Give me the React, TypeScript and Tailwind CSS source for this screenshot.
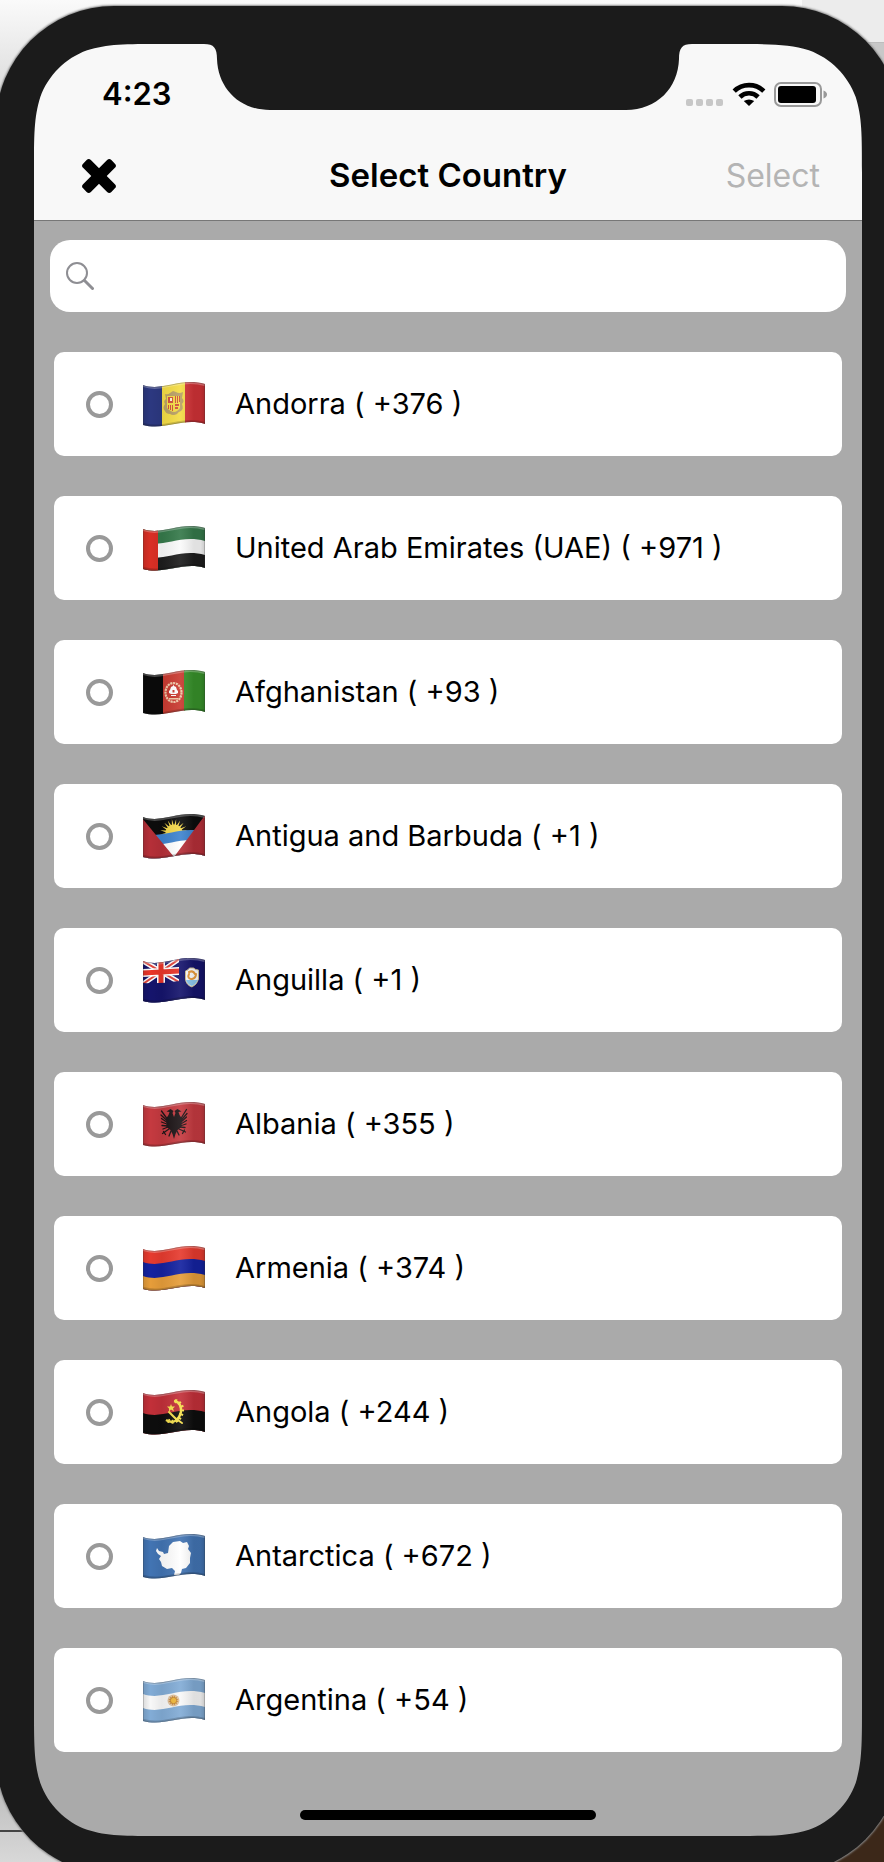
import { useState } from "react";
import type { ReactNode } from "react";

/** Area below a wavy horizontal edge that lies `d` units under the flag's top edge. */
const below = (d: number) =>
  `M0 ${3 + d}C20 ${10 + d} 36 ${-5 + d} 62 ${2 + d}V60H0Z`;

const OUTLINE = "M0 3C20 10 36 -5 62 2V42C40 35 22 49 0 43Z";

const rays = (n: number, cx: number, cy: number, inner: number, outer: number, from: number, to: number) =>
  Array.from({ length: n }, (_, i) => {
    const step = (to - from) / n;
    const a = from + step * i;
    const p = (r: number, t: number) => `${(cx + r * Math.cos(t)).toFixed(2)} ${(cy + r * Math.sin(t)).toFixed(2)}`;
    return `M${p(inner, a)}L${p(outer, a + step / 2)}L${p(inner, a + step)}Z`;
  }).join("");

type Country = { code: string; name: string; dial: string; flag: ReactNode };

const countries: Country[] = [
  {
    code: "AD",
    name: "Andorra",
    dial: "+376",
    flag: (
      <>
        <path fill="#2c3880" d="M0 0h20v46H0z" />
        <path fill="#f4dc45" d="M19 0h24v46H19z" />
        <path fill="#d03236" d="M42 0h20v46H42z" />
        <path fill="#b9a065" d="M22 12q3 1 5-1l3-2 3 1q3 2 7 0l-1 6q3 3 0 6 2 5-1 7-3 1-4 3-4 2-7 0-4 0-5-3-3-3 0-7-2-3 1-5z" />
        <path fill="#f4dc45" d="M24 14h13v12q-3 4-6 4t-7-4z" />
        <path fill="#d2503c" d="M25 15h5v6h-5zM32 14h1v7h-1zM34 14h1v7h-1zM36 14h1v6h-1zM25 23h1v4h-1zM27 23h1v5h-1zM29 23h1v6h-1zM32 22h4v2h-4zM32 25h3v2h-3z" />
        <path fill="#fff3d0" d="M27 16h2v3h-2z" />
      </>
    ),
  },
  {
    code: "AE",
    name: "United Arab Emirates (UAE)",
    dial: "+971",
    flag: (
      <>
        <path fill="#35794a" d="M0 0h62v46H0z" />
        <path fill="#fafafa" d={below(13)} />
        <path fill="#1d1d1d" d={below(27)} />
        <path fill="#d92f25" d="M0 0h15v46H0z" />
      </>
    ),
  },
  {
    code: "AF",
    name: "Afghanistan",
    dial: "+93",
    flag: (
      <>
        <path fill="#0a0a0a" d="M0 0h21v46H0z" />
        <path fill="#c93a30" d="M20 0h22v46H20z" />
        <path fill="#37902a" d="M41 0h21v46H41z" />
        <ellipse cx="30.500" cy="22.500" rx="8" ry="9.500" fill="none" stroke="#f0c9a8" strokeWidth="2.200" strokeDasharray="2.200 .7" />
        <path fill="#fff" d="M26 21l1-1 1-3 2-1 .5-2 .5 2 2 1 1 3 1 1v2l-2 1v2h-5v-2l-2-1z" />
        <path fill="#f0c9a8" d="M26 28h9v1.500h-9z" />
        <path fill="#c93a30" d="M29.500 20h2v2.500h-2zM28 24h5v1h-5z" />
      </>
    ),
  },
  {
    code: "AG",
    name: "Antigua and Barbuda",
    dial: "+1",
    flag: (
      <>
        <path fill="#0c0c0c" d="M0 0h62v46H0z" />
        <path fill="#f5d94b" d={rays(12, 31, 19, 7, 14, -Math.PI * 1.08, Math.PI * 0.08)} />
        <circle cx="31" cy="19" r="8.500" fill="#f5d94b" />
        <path fill="#3f84cf" d={below(16)} />
        <path fill="#fff" d={below(26)} />
        <path fill="#b52f38" d="M-1 4L31 43 30 48H-1zM63 0L31 43 32 48H63z" />
      </>
    ),
  },
  {
    code: "AI",
    name: "Anguilla",
    dial: "+1",
    flag: (
      <>
        <path fill="#15146c" d="M0 0h62v46H0z" />
        <g transform="translate(0 3) skewY(-3)">
          <path fill="none" stroke="#fff" strokeWidth="5" d="M0 0L36 23M36 0L0 23" />
          <path fill="none" stroke="#e0453c" strokeWidth="2" d="M0 0L36 23M36 0L0 23" />
          <path fill="#fff" d="M14 0h8v25h-8zM0 8h36v8H0z" />
          <path fill="#e93529" d="M15.500 0h5v25h-5zM0 9.500h36v5H0z" />
        </g>
        <path fill="#15146c" d="M36 0h8v46h-8zM0 25Q18 26 36 23V46H0z" />
        <path fill="#fff" stroke="#cdbd91" d="M42.500 13q3-1 4-3h4q2 2 5 2v9q-1 5-6.500 8-6-2-6.500-8z" />
        <path fill="#8cc8f0" d="M43 22h12q-2 4-6 6-5-2-6-6z" />
        <path fill="none" stroke="#eb9d3d" strokeWidth="2" strokeLinecap="round" d="M46 14q4-2 6 2M53 16q0 4-4 5M48 21q-4-1-2-5" />
      </>
    ),
  },
  {
    code: "AL",
    name: "Albania",
    dial: "+355",
    flag: (
      <>
        <path fill="#c53a40" d="M0 0h62v46H0z" />
        <path
          fill="#1d1517"
          d="M31 15l-1.500-4 1-2-3-2-4 2.500 3 .5-1 3-2 3v9l4 3 2 4 1.500 5 1.500-5 2-4 4-3v-9l-2-3-1-3 3-.500-4-2.500-3 2 1 2z"
        />
        <path
          fill="none"
          stroke="#1d1517"
          strokeWidth="1.300"
          strokeLinecap="round"
          d="M25 18L18.500 9M25 19.500L18 13M25 21L18.500 16.500M25 22.500L18.500 20M25 24L19 23.500M25 25L20 27M26 27L19.500 31.500M20.500 29.500L22.500 32.500M28 29L26 34M37 18L43.500 7.500M37 19.500L44 11.500M37 21L43.500 15M37 22.500L43.500 18.500M37 24L43 22M37 25L42 25.500M36 27L42.500 30M41.500 28L39.500 31.500M34 29L36 33"
        />
      </>
    ),
  },
  {
    code: "AM",
    name: "Armenia",
    dial: "+374",
    flag: (
      <>
        <path fill="#e63b2f" d="M0 0h62v46H0z" />
        <path fill="#1422a0" d={below(13)} />
        <path fill="#e69d3a" d={below(27)} />
      </>
    ),
  },
  {
    code: "AO",
    name: "Angola",
    dial: "+244",
    flag: (
      <>
        <path fill="#c23039" d="M0 0h62v46H0z" />
        <path fill="#0d0d0d" d={below(20)} />
        <path fill="none" stroke="#f5df4d" strokeWidth="2.500" d="M31 11c7 1 9 9 5 16-3 5-8 6-13 3" />
        <path fill="none" stroke="#f5df4d" strokeWidth="4" strokeDasharray="1.800 2.200" d="M32 11c7 1 9 9 5 16-3 5-8 6-13 3" />
        <path fill="none" stroke="#f5df4d" strokeWidth="2" strokeLinecap="round" d="M26 22q6 7 13 11" />
        <path fill="#f5df4d" d="M28 14l1 2.500 3 0-2 2 1 3-3-2-2 2 0-3-2-2 3 0z" />
      </>
    ),
  },
  {
    code: "AQ",
    name: "Antarctica",
    dial: "+672",
    flag: (
      <>
        <path fill="#4274b3" d="M0 0h62v46H0z" />
        <path fill="#fff" d="M14 14l2 3 4 1 1 2 4-1 1-7 4-4 7-1 3 2 4-1 2 4-1 3 3 4-1 5 0 5-4 5-4 1-1 4-3 3-4-1 1-4-3-3-5 1-5-3-1-4-2-3 2-3-3-2-2-3z" />
      </>
    ),
  },
  {
    code: "AR",
    name: "Argentina",
    dial: "+54",
    flag: (
      <>
        <path fill="#82acd6" d="M0 0h62v46H0z" />
        <path fill="#f8f8f8" d={below(13)} />
        <path fill="#82acd6" d={below(27)} />
        <circle cx="30.500" cy="22.500" r="6" fill="#dfc3a0" />
        <path fill="#c8873d" d={rays(12, 30.5, 22.5, 3, 5.5, 0, Math.PI * 2)} />
        <circle cx="30.500" cy="22.500" r="3.200" fill="#efb83c" stroke="#b87a2d" strokeWidth=".8" />
      </>
    ),
  },
];

function Flag({ code, children }: { code: string; children: ReactNode }) {
  return (
    <svg viewBox="0 0 62 45" className="h-[45px] w-[62px] shrink-0" aria-hidden="true">
      <defs>
        <clipPath id={`clip-${code}`}>
          <path d={OUTLINE} />
        </clipPath>
        <linearGradient id={`shade-${code}`}>
          <stop offset="0" stopColor="#000" stopOpacity=".12" />
          <stop offset=".12" stopColor="#000" stopOpacity="0" />
          <stop offset=".3" stopColor="#000" stopOpacity=".06" />
          <stop offset=".6" stopColor="#fff" stopOpacity=".08" />
          <stop offset=".82" stopColor="#000" stopOpacity=".1" />
          <stop offset=".93" stopColor="#000" stopOpacity=".1" />
          <stop offset="1" stopColor="#000" stopOpacity=".2" />
        </linearGradient>
      </defs>
      <g clipPath={`url(#clip-${code})`}>
        {children}
        <path fill={`url(#shade-${code})`} d="M0 0h62v46H0z" />
        <path fill="none" stroke="#fff" strokeOpacity=".25" strokeWidth="4" d="M0 3C20 10 36 -5 62 2" />
        <path fill="none" stroke="#000" strokeOpacity=".16" strokeWidth="4" d="M62 42C40 35 22 49 0 43" />
        <path fill="none" stroke="#333" strokeOpacity=".3" strokeWidth="1.500" d={OUTLINE} />
      </g>
    </svg>
  );
}

function Corner({ className }: { className: string }) {
  return (
    <svg viewBox="0 0 129 129" className={`pointer-events-none absolute size-[129px] ${className}`} aria-hidden="true">
      <path
        fill="#1b1b1b"
        d="M-1 -1V128.400H0C0 91.400 0 72.900 6.300 53.100C14.200 31.300 31.300 14.200 53.100 6.300C72.900 0 91.400 0 128.400 0V-1Z"
      />
    </svg>
  );
}

function StatusIcons() {
  return (
    <div className="flex items-center gap-2">
      <svg viewBox="0 0 38 25" className="h-[25px] w-[38px]" aria-hidden="true">
        {[0, 10, 20, 30].map((x) => (
          <rect key={x} x={x} y="17" width="7" height="7" rx="2" fill="#c7c7c7" />
        ))}
      </svg>
      <svg viewBox="0 0 34 25" className="h-[25px] w-[34px]" aria-hidden="true">
        <g fill="none" stroke="#000" strokeWidth="4.600">
          <path d="M2.200 9.200A21 21 0 0 1 31.800 9.200" />
          <path d="M7.900 15A13 13 0 0 1 26.100 15" />
        </g>
        <path d="M17 24L11.800 19Q17 15.800 22.200 19Z" />
      </svg>
      <svg viewBox="0 0 54 25" className="h-[25px] w-[54px]" aria-hidden="true">
        <rect x="1" y="1" width="46" height="23" rx="6" fill="none" stroke="#999" strokeWidth="2" />
        <rect x="4" y="4" width="38" height="17" rx="3" />
        <path fill="#999" d="M49.500 8.500Q53 10 53 12.500T49.500 16.500Z" />
      </svg>
    </div>
  );
}

export default function App() {
  const [selected, setSelected] = useState<string | null>(null);
  const [query, setQuery] = useState("");
  const shown = countries.filter((c) => c.name.toLowerCase().includes(query.toLowerCase()));

  return (
    <div className="relative isolate h-screen overflow-hidden bg-[#e6e6e6] pt-[6px] font-[Inter,sans-serif] text-black">
      <div className="absolute inset-0 -z-10 flex flex-col justify-between" aria-hidden="true">
        <div className="flex h-[120px]">
          <div className="grow bg-linear-to-b from-[#fafafa] to-[#d4d4d4]" />
          <div className="w-[82px] bg-[#c8c8c8]">
            <div className="h-[43px] border-b border-[#bdbdbd] bg-[#ececec]" />
          </div>
        </div>
        <div className="flex h-[102px]">
          <div className="grow bg-linear-to-b from-[#b4b4b4] to-[#d8d8d8]">
            <div className="h-[72px] border-b-2 border-[#444]" />
          </div>
          <div className="w-[100px] bg-[#3c2819]" />
        </div>
      </div>

      <div className="-mr-4 -ml-1 rounded-[118px] bg-[#1b1b1b] p-[38px] shadow-[0_0_2px_1px_#8a8a8a]">
        <main className="relative overflow-hidden bg-[#aaaaaa]">
          <header className="border-b border-[#777777] bg-[#f8f8f8]">
            <div className="flex h-[88px] items-center justify-between pt-3 pr-[34px] pl-[68px]">
              <time className="text-[31px] font-semibold">4:23</time>
              <StatusIcons />
            </div>
            <div className="grid h-[88px] grid-cols-[1fr_auto_1fr] items-center px-[42px]">
              <button type="button" aria-label="Close" className="justify-self-start p-1">
                <svg viewBox="0 0 38 38" className="size-[38px]" aria-hidden="true">
                  <g transform="rotate(45 19 19)">
                    <rect x="-1" y="13.500" width="40" height="11" rx="3" />
                    <rect x="13.500" y="-1" width="11" height="40" rx="3" />
                  </g>
                </svg>
              </button>
              <h1 className="text-[33px] font-semibold">Select Country</h1>
              <button type="button" disabled={!selected} className="justify-self-end text-[32px] disabled:text-[#b4b4b4]">
                Select
              </button>
            </div>
          </header>

          <label className="mx-4 mt-[19px] flex h-[72px] items-center gap-3 rounded-[20px] bg-white px-4">
            <svg viewBox="0 0 28 28" className="size-7 shrink-0" fill="none" stroke="#8e8e93" aria-hidden="true">
              <circle cx="11" cy="11" r="10" strokeWidth="2" />
              <path d="M18.500 18.500L26.500 26.500" strokeWidth="3" strokeLinecap="round" />
            </svg>
            <input
              type="text"
              aria-label="Search countries"
              value={query}
              onChange={(e) => setQuery(e.target.value)}
              className="h-full min-w-0 grow bg-transparent text-[29px] outline-none"
            />
          </label>

          <ul className="mx-5 mt-10 flex flex-col gap-10">
            {shown.map((c) => (
              <li key={c.code}>
                <label className="flex h-[104px] items-center rounded-[10px] bg-white px-8">
                  <input
                    type="radio"
                    name="country"
                    checked={selected === c.code}
                    onChange={() => setSelected(c.code)}
                    className="mr-[30px] size-[27px] shrink-0 appearance-none rounded-full border-4 border-[#999999] checked:bg-black"
                  />
                  <Flag code={c.code}>{c.flag}</Flag>
                  <span className="ml-[30px] text-[29px]">
                    {c.name} ( {c.dial} )
                  </span>
                </label>
              </li>
            ))}
          </ul>

          <div className="mx-auto mt-[58px] mb-4 h-[10px] w-[296px] rounded-full bg-black" />

          <div className="pointer-events-none absolute inset-x-0 top-0 flex justify-center">
            <svg viewBox="0 0 488 66" className="h-[66px] w-[488px]" aria-hidden="true">
              <path
                fill="#1b1b1b"
                d="M0 0C10 0 13 4 13 15C14 44 35 66 66 66H422C453 66 474 44 475 15C475 4 478 0 488 0Z"
              />
            </svg>
          </div>
          <Corner className="top-0 left-0" />
          <Corner className="top-0 right-0 -scale-x-100" />
          <Corner className="bottom-0 left-0 -scale-y-100" />
          <Corner className="right-0 bottom-0 rotate-180" />
        </main>
      </div>
    </div>
  );
}
